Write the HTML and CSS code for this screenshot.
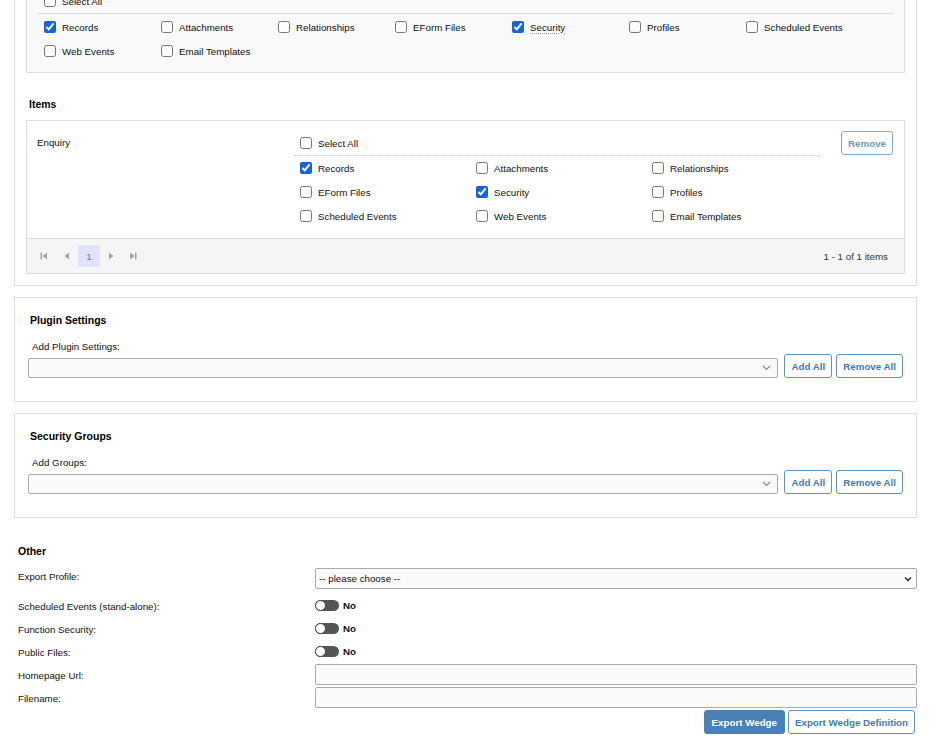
FILE: index.html
```html
<!DOCTYPE html>
<html lang="en">
<head>
    <meta charset="UTF-8">
    <meta name="viewport" content="width=device-width, initial-scale=1.0">
    <title>Export Wedge</title>
    <link rel="stylesheet" href="styles.css">
</head>
<body>
    <div class="page">
        <!-- types + items -->
        <div class="panel panel-types">
            <div class="type-box">
                <div class="select-all">
                    <label class="check"><input type="checkbox"> Select All</label>
                </div>
                <div class="type-grid">
                    <label class="check"><input type="checkbox" checked> Records</label>
                    <label class="check"><input type="checkbox"> Attachments</label>
                    <label class="check"><input type="checkbox"> Relationships</label>
                    <label class="check"><input type="checkbox"> EForm Files</label>
                    <label class="check"><input type="checkbox" checked> <span class="hint">Security</span></label>
                    <label class="check"><input type="checkbox"> Profiles</label>
                    <label class="check"><input type="checkbox"> Scheduled Events</label>
                    <label class="check"><input type="checkbox"> Web Events</label>
                    <label class="check"><input type="checkbox"> Email Templates</label>
                </div>
            </div>

            <h3 class="section-title">Items</h3>
            <div class="items-box">
                <div class="item-row">
                    <div class="item-name">Enquiry</div>
                    <div class="item-checks">
                        <div class="item-select-all">
                            <label class="check"><input type="checkbox"> Select All</label>
                        </div>
                        <div class="item-grid">
                            <label class="check"><input type="checkbox" checked> Records</label>
                            <label class="check"><input type="checkbox"> Attachments</label>
                            <label class="check"><input type="checkbox"> Relationships</label>
                            <label class="check"><input type="checkbox"> EForm Files</label>
                            <label class="check"><input type="checkbox" checked> Security</label>
                            <label class="check"><input type="checkbox"> Profiles</label>
                            <label class="check"><input type="checkbox"> Scheduled Events</label>
                            <label class="check"><input type="checkbox"> Web Events</label>
                            <label class="check"><input type="checkbox"> Email Templates</label>
                        </div>
                    </div>
                    <div class="item-actions">
                        <button class="button button-outline button-faded">Remove</button>
                    </div>
                </div>
                <div class="pager">
                    <a class="pager-link first">
                        <svg width="8" height="8" viewBox="0 0 8 8"><rect x="0.5" y="0.5" width="1.5" height="7" fill="#a3a3a3"/><polygon points="7,0.5 7,7.5 2.5,4" fill="#a3a3a3"/></svg>
                    </a>
                    <a class="pager-link">
                        <svg width="8" height="8" viewBox="0 0 8 8"><polygon points="6,0.5 6,7.5 1.5,4" fill="#a3a3a3"/></svg>
                    </a>
                    <a class="pager-link current">1</a>
                    <a class="pager-link">
                        <svg width="8" height="8" viewBox="0 0 8 8"><polygon points="2,0.5 2,7.5 6.5,4" fill="#a3a3a3"/></svg>
                    </a>
                    <a class="pager-link">
                        <svg width="8" height="8" viewBox="0 0 8 8"><polygon points="1,0.5 1,7.5 5.5,4" fill="#a3a3a3"/><rect x="6" y="0.5" width="1.5" height="7" fill="#a3a3a3"/></svg>
                    </a>
                    <span class="pager-info">1 - 1 of 1 items</span>
                </div>
            </div>
        </div>

        <!-- plugin settings -->
        <div class="panel panel-add">
            <h3 class="section-title">Plugin Settings</h3>
            <div class="field-label">Add Plugin Settings:</div>
            <div class="add-row">
                <div class="select">
                    <span></span>
                    <svg class="chevron" width="9" height="6" viewBox="0 0 9 6"><polyline points="1,1 4.5,4.5 8,1" fill="none" stroke="#8a8a8a" stroke-width="1.2"/></svg>
                </div>
                <button class="button button-outline">Add All</button>
                <button class="button button-outline">Remove All</button>
            </div>
        </div>

        <!-- security groups -->
        <div class="panel panel-add">
            <h3 class="section-title">Security Groups</h3>
            <div class="field-label">Add Groups:</div>
            <div class="add-row">
                <div class="select">
                    <span></span>
                    <svg class="chevron" width="9" height="6" viewBox="0 0 9 6"><polyline points="1,1 4.5,4.5 8,1" fill="none" stroke="#8a8a8a" stroke-width="1.2"/></svg>
                </div>
                <button class="button button-outline">Add All</button>
                <button class="button button-outline">Remove All</button>
            </div>
        </div>

        <!-- other -->
        <div class="other">
            <h3 class="other-title">Other</h3>
            <div class="form-row form-row-first">
                <div class="form-label">Export Profile:</div>
                <div class="select select-dark">
                    <span>-- please choose --</span>
                    <svg class="chevron" width="8" height="6" viewBox="0 0 8 6"><polyline points="1,1.5 4,4.5 7,1.5" fill="none" stroke="#222" stroke-width="1.4"/></svg>
                </div>
            </div>
            <div class="form-row">
                <div class="form-label">Scheduled Events (stand-alone):</div>
                <div class="switch-field"><span class="switch"></span><span class="switch-text">No</span></div>
            </div>
            <div class="form-row">
                <div class="form-label">Function Security:</div>
                <div class="switch-field"><span class="switch"></span><span class="switch-text">No</span></div>
            </div>
            <div class="form-row">
                <div class="form-label">Public Files:</div>
                <div class="switch-field"><span class="switch"></span><span class="switch-text">No</span></div>
            </div>
            <div class="form-row">
                <div class="form-label">Homepage Url:</div>
                <input class="text-input" type="text">
            </div>
            <div class="form-row">
                <div class="form-label">Filename:</div>
                <input class="text-input" type="text">
            </div>
            <div class="form-actions">
                <button class="button button-primary">Export Wedge</button>
                <button class="button button-outline">Export Wedge Definition</button>
            </div>
        </div>
    </div>
</body>
</html>
```

FILE: styles.css
```css
* {
    margin: 0;
    padding: 0;
    box-sizing: border-box;
}

body {
    font-family: 'Liberation Sans', Arial, sans-serif;
    font-size: 9.75px;
    color: #111;
    background: #fff;
    overflow: hidden;
}

.page {
    width: 903px;
    margin: -30px 0 0 14px;
}

.panel {
    border: 1px solid #ddd;
    background: #fff;
    padding: 11px;
    margin-bottom: 11px;
}

.panel-add {
    padding: 14px 13px 23px 13px;
}

.section-title {
    font-size: 10.5px;
    font-weight: bold;
    line-height: 16px;
    color: #000;
    padding-left: 3px;
}

.panel-add .section-title {
    padding-left: 2px;
    margin-bottom: 12px;
}

/* checkboxes */
.check {
    display: flex;
    align-items: center;
    height: 24px;
    white-space: nowrap;
    color: #111;
}

.check input {
    width: 12px;
    height: 12px;
    margin: 0 6px 0 0;
    accent-color: #1664d9;
}

.hint {
    text-decoration: underline dotted #999;
    text-underline-offset: 2px;
}

.type-box {
    border: 1px solid #ddd;
    background: #f9f9f9;
    padding: 6px 11px 9px;
}

.select-all {
    padding-left: 6px;
    border-bottom: 1px solid #ddd;
}

.type-grid {
    display: grid;
    grid-template-columns: repeat(7, 117px);
    padding: 1px 0 0 6px;
}

.panel-types .section-title {
    margin: 23px 0 8px;
}

/* items */
.items-box {
    border: 1px solid #ddd;
    background: #fff;
}

.item-row {
    display: flex;
    padding: 10px 11px 10px 10px;
}

.item-name {
    width: 257px;
    line-height: 24px;
}

.item-checks {
    width: 526px;
}

.item-select-all {
    padding-left: 6px;
    border-bottom: 1px dotted #ccc;
}

.item-grid {
    display: grid;
    grid-template-columns: repeat(3, 176px);
    padding-left: 6px;
}

.item-actions {
    flex: 1;
    display: flex;
    justify-content: flex-end;
    align-items: flex-start;
}

.pager {
    display: flex;
    align-items: center;
    height: 35px;
    border-top: 1px solid #ddd;
    background: #f5f5f5;
    padding: 0 16px 0 6px;
}

.pager-link {
    width: 22px;
    height: 22px;
    display: flex;
    align-items: center;
    justify-content: center;
    color: #5b6fe0;
}

.pager-link.first {
    margin-right: 1px;
}

.pager-link.current {
    background: #dfe4fb;
}

.pager-info {
    margin-left: auto;
    color: #333;
}

/* buttons */
.button {
    font-family: inherit;
    font-size: 9.75px;
    font-weight: bold;
    height: 24px;
    padding: 0 6px;
    border-radius: 3px;
    cursor: pointer;
}

.button-outline {
    background: #fff;
    color: #3f7bb8;
    border: 1px solid #5d91c8;
}

.button-faded {
    color: #6b9cca;
    border-color: #7faad3;
}

.button-primary {
    background: #4a80b5;
    color: #fff;
    border: 1px solid #4a80b5;
    padding: 0 7px;
}

/* selects */
.field-label {
    padding-left: 4px;
    line-height: 14px;
}

.add-row {
    display: flex;
    align-items: flex-end;
}

.select {
    flex: 1;
    height: 20px;
    display: flex;
    align-items: center;
    justify-content: space-between;
    border: 1px solid #aaa;
    border-radius: 2px;
    background: #fafafa;
    padding: 0 6px 0 3px;
    margin-right: 6px;
}

.add-row .button + .button {
    margin-left: 4px;
}

.select-dark {
    height: 21px;
    margin-right: 0;
    padding-right: 4px;
    color: #111;
}

/* other */
.other {
    padding: 14px 0 0 4px;
}

.other-title {
    font-size: 10.5px;
    font-weight: bold;
    line-height: 16px;
    color: #000;
    margin-bottom: 9px;
}

.form-row {
    display: grid;
    grid-template-columns: 297px 1fr;
    align-items: center;
    height: 21px;
    margin-bottom: 2px;
}

.form-row-first {
    margin-bottom: 6px;
}

.form-label {
    padding-top: 2px;
}

.form-row-first .form-label {
    align-self: start;
    line-height: 14px;
}

.switch-field {
    display: flex;
    align-items: center;
}

.switch {
    position: relative;
    width: 24px;
    height: 11px;
    border-radius: 6px;
    background: #555;
    margin-right: 4px;
}

.switch::before {
    content: "";
    position: absolute;
    left: 0;
    top: 0;
    width: 11px;
    height: 11px;
    border-radius: 50%;
    background: #fff;
    border: 1.5px solid #444;
    box-sizing: border-box;
}

.switch-text {
    font-weight: bold;
}

.text-input {
    height: 21px;
    width: 100%;
    border: 1px solid #aaa;
    border-radius: 2px;
    background: #fafafa;
    outline: none;
}

.form-actions {
    display: flex;
    justify-content: flex-end;
    gap: 3px;
    margin-top: 2px;
    padding-right: 2px;
}
```
